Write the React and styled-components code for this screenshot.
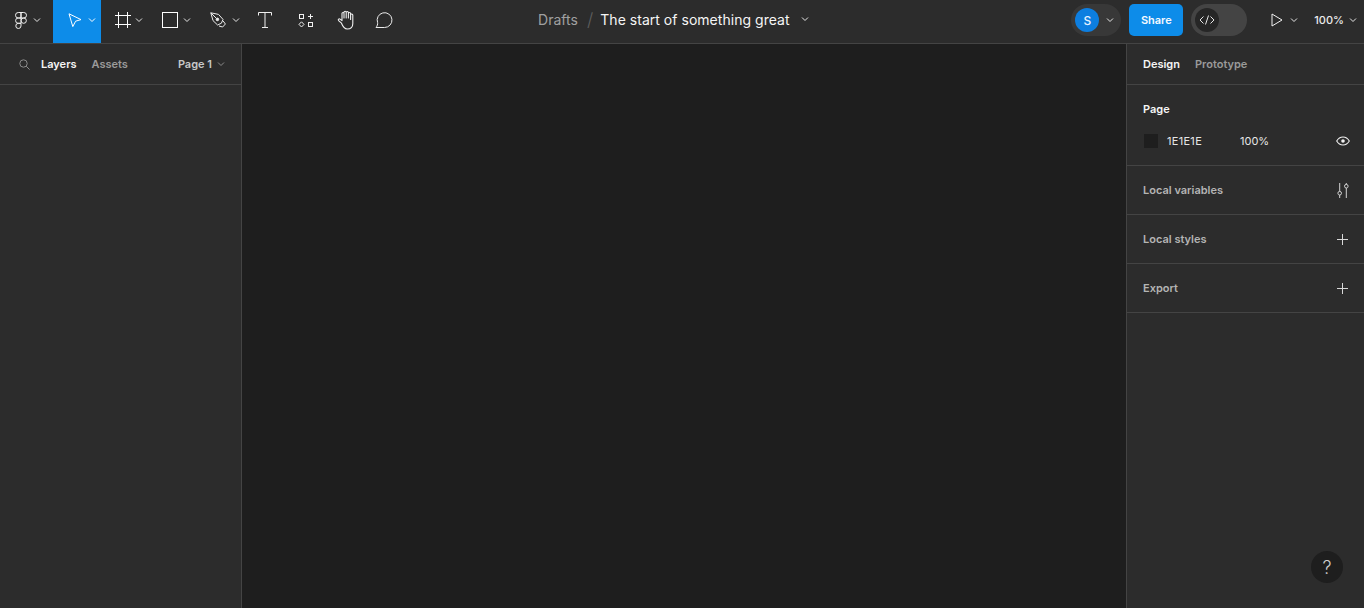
import React from "react";
import styled, { createGlobalStyle } from "styled-components";

const GlobalStyle = createGlobalStyle`
  html, body, #root {
    margin: 0;
    height: 100%;
  }
  body {
    background: #1e1e1e;
    color: #fff;
    font-family: Inter, "Liberation Sans", sans-serif;
    overflow: hidden;
  }
`;

const Chevron = ({ color = "#e6e6e6", size = 8 }) => (
  <svg width={size} height={size} viewBox="0 0 8 8" fill="none">
    <path d="M1 2.5L4 5.5L7 2.5" stroke={color} strokeWidth="1" />
  </svg>
);

const FigmaIcon = () => (
  <svg width="12" height="17" viewBox="0 0 12 17" fill="none" stroke="#f0f0f0" strokeWidth="1">
    <path d="M6 .5H3.25a2.75 2.75 0 0 0 0 5.5H6V.5Z" />
    <path d="M6 .5h2.75a2.75 2.75 0 0 1 0 5.5H6V.5Z" />
    <path d="M6 6H3.25a2.6 2.6 0 0 0 0 5.3H6V6Z" />
    <circle cx="8.7" cy="8.65" r="2.65" />
    <path d="M6 11.3H3.25a2.6 2.6 0 1 0 2.75 2.6v-2.6Z" />
  </svg>
);

const MoveIcon = () => (
  <svg width="14" height="15" viewBox="0 0 14 15" fill="none" stroke="#fff" strokeWidth="1">
    <path d="M1 .8L13 6.6L7.6 8.2L4.8 13.6L1 .8Z" strokeLinejoin="round" />
  </svg>
);

const FrameIcon = () => (
  <svg width="16" height="16" viewBox="0 0 16 16" fill="none" stroke="#fff" strokeWidth="1">
    <path d="M3.5 0v16M12.5 0v16M0 3.5h16M0 12.5h16" />
  </svg>
);

const RectIcon = () => (
  <svg width="16" height="16" viewBox="0 0 16 16" fill="none" stroke="#fff" strokeWidth="1">
    <rect x=".5" y=".5" width="15" height="15" />
  </svg>
);

const PenIcon = () => (
  <svg width="16" height="16" viewBox="0 0 16 16" fill="none" stroke="#ececec" strokeWidth="1">
    <path d="M.8.8L8.5 2.4L13 7.4L11.4 11.2L7.6 13L3 8.6L.8.8Z" strokeLinejoin="round" />
    <path d="M.8.8L6.6 6.6M13 8.8L15.4 12L12.6 15L9 14" />
    <circle cx="7.4" cy="7.4" r="1.3" fill="#ececec" />
  </svg>
);

const TextIcon = () => (
  <svg width="14" height="16" viewBox="0 0 14 16" fill="none" stroke="#f0f0f0" strokeWidth="1">
    <path d="M.5 3.5V.5h13v3M7 .5v15M4 15.5h6" />
  </svg>
);

const ResourcesIcon = () => (
  <svg width="16" height="15" viewBox="0 0 16 15" fill="none" stroke="#f0f0f0" strokeWidth="1">
    <rect x="1.5" y="1.5" width="4" height="4" />
    <rect x="10.5" y="9.5" width="4" height="4" />
    <path d="M12.5 1v5M10 3.5h5M3.5 8.8L6 11.4L3.5 14L1 11.4L3.5 8.8Z" />
  </svg>
);

const HandIcon = () => (
  <svg width="18" height="20" viewBox="0 0 18 20" fill="none" stroke="#f0f0f0" strokeWidth="1.1" strokeLinecap="round" strokeLinejoin="round">
    <path d="M4.5 13.2L1.6 10.6c-.9-.9.4-2.3 1.5-1.5L5 10.6V3.6c0-1.4 2-1.4 2 0V8M7 2.4c0-1.5 2.2-1.5 2.2 0V8M9.2 2.6c0-1.4 2.2-1.4 2.2 0V8M11.4 3.6c0-1.4 2.2-1.4 2.2 0V9.5M13.6 5c0-1.4 2.2-1.4 2.2 0v8.5c0 3.4-2.4 5.5-5.6 5.5-2.6 0-4-1.4-5.7-5.8" />
  </svg>
);

const CommentIcon = () => (
  <svg width="18" height="18" viewBox="0 0 18 18" fill="none" stroke="#ececec" strokeWidth="1">
    <path d="M1 16.5H9.6A7.4 7.4 0 1 0 2.6 11.6C2.9 13 2.2 15.2 1 16.5Z" strokeLinejoin="round" />
  </svg>
);

const SearchIcon = () => (
  <svg width="11" height="11" viewBox="0 0 11 11" fill="none" stroke="#8c8c8c" strokeWidth="1">
    <circle cx="4.5" cy="4.5" r="3.7" />
    <path d="M7.2 7.2L10.6 10.6" />
  </svg>
);

const PlayIcon = () => (
  <svg width="12" height="14" viewBox="0 0 12 14" fill="none" stroke="#f0f0f0" strokeWidth="1">
    <path d="M1 1v12l10-6L1 1Z" strokeLinejoin="round" />
  </svg>
);

const EyeIcon = () => (
  <svg width="14" height="10" viewBox="0 0 14 10" fill="none" stroke="#f2f2f2" strokeWidth="1.1">
    <path d="M.7 5C2.2 2.4 4.4 1 7 1s4.8 1.4 6.3 4C11.8 7.6 9.6 9 7 9S2.2 7.6.7 5Z" />
    <circle cx="7" cy="5" r="1.8" fill="#f2f2f2" stroke="none" />
  </svg>
);

const SlidersIcon = () => (
  <svg width="14" height="15" viewBox="0 0 14 15" fill="none" stroke="#d2d2d2" strokeWidth="1">
    <path d="M3.7 0v8.5M3.7 12v3M10.3 0v1.5M10.3 5v10" />
    <circle cx="3.7" cy="10.2" r="1.8" />
    <circle cx="10.3" cy="3.2" r="1.8" />
  </svg>
);

const PlusIcon = () => (
  <svg width="11" height="11" viewBox="0 0 11 11" fill="none" stroke="#d8d8d8" strokeWidth="1">
    <path d="M5.5 0v11M0 5.5h11" />
  </svg>
);

const Page = styled.div`
  width: 1364px;
  height: 608px;
  display: flex;
  flex-direction: column;
  position: relative;
`;

const Toolbar = styled.header`
  height: 43px;
  flex: none;
  display: flex;
  align-items: stretch;
  background: #2c2c2c;
  border-bottom: 1px solid #444;
`;

const ToolGroup = styled.div`
  display: flex;
  align-items: stretch;
  flex: none;
`;

const LogoButton = styled.div`
  width: 53px;
  padding: 0 0 3px 15px;
  box-sizing: border-box;
  display: flex;
  align-items: center;
  gap: 6px;
`;

const DropTool = styled.div`
  width: 48px;
  padding: 0 0 3px ${(p) => p.$pad}px;
  box-sizing: border-box;
  display: flex;
  align-items: center;
  gap: ${(p) => p.$gap}px;
  background: ${(p) => (p.$active ? "#0d8ce9" : "transparent")};
`;

const IconTool = styled.div`
  width: ${(p) => p.$w || 39.5}px;
  padding-bottom: 3px;
  box-sizing: border-box;
  display: flex;
  align-items: center;
  justify-content: center;
`;

const Breadcrumb = styled.div`
  flex: 1;
  display: flex;
  align-items: center;
  padding: 0 0 5px 134px;
  font-size: 14px;
  letter-spacing: 0.03px;
  white-space: nowrap;
`;

const Folder = styled.span`
  color: #a0a0a0;
`;

const Slash = styled.span`
  color: #5e5e5e;
  margin: 0 7px 0 9px;
  font-size: 18px;
  font-weight: 300;
`;

const FileName = styled.span`
  color: #f5f5f5;
  margin-right: 11px;
`;

const RightTools = styled.div`
  flex: none;
  display: flex;
  align-items: center;
  padding: 0 7px 3px 0;
`;

const AvatarPill = styled.div`
  width: 50px;
  height: 32px;
  border-radius: 16px;
  background: #383838;
  padding-left: 4px;
  box-sizing: border-box;
  display: flex;
  align-items: center;
  gap: 7px;
`;

const Avatar = styled.div`
  width: 24px;
  height: 24px;
  border-radius: 50%;
  background: #0d7ee0;
  color: #e8f2ff;
  font-size: 12px;
  font-weight: 500;
  display: flex;
  align-items: center;
  justify-content: center;
`;

const ShareButton = styled.div`
  width: 54px;
  height: 32px;
  margin-left: 8px;
  border-radius: 5px;
  background: #0d8ce9;
  color: #f4f9ff;
  font-size: 11px;
  font-weight: 600;
  display: flex;
  align-items: center;
  justify-content: center;
`;

const DevToggle = styled.div`
  width: 56px;
  height: 32px;
  margin-left: 8px;
  border-radius: 16px;
  background: #444;
  padding-left: 4px;
  box-sizing: border-box;
  display: flex;
  align-items: center;
`;

const DevKnob = styled.div`
  width: 24px;
  height: 24px;
  border-radius: 50%;
  background: #262626;
  display: flex;
  align-items: center;
  justify-content: center;
`;

const PlayButton = styled.div`
  margin-left: 24px;
  display: flex;
  align-items: center;
  gap: 7px;
`;

const Zoom = styled.div`
  margin-left: 16px;
  display: flex;
  align-items: center;
  gap: 5px;
  font-size: 11px;
  font-weight: 500;
  color: #ececec;
`;

const Body = styled.main`
  flex: 1;
  min-height: 0;
  display: flex;
`;

const LeftPanel = styled.aside`
  width: 241px;
  flex: none;
  background: #2c2c2c;
  border-right: 1px solid #444;
`;

const RightPanel = styled.aside`
  width: 237px;
  flex: none;
  background: #2c2c2c;
  border-left: 1px solid #444;
  position: relative;
`;

const Canvas = styled.div`
  flex: 1;
  background: #1e1e1e;
`;

const PanelHead = styled.div`
  height: 40px;
  display: flex;
  align-items: center;
  border-bottom: 1px solid #444;
  font-size: 11px;
  font-weight: 600;
`;

const LeftHead = styled(PanelHead)`
  padding: 0 16px 0 19px;
  gap: 11px;
`;

const RightHead = styled(PanelHead)`
  padding-left: 16px;
`;

const Tab = styled.span`
  color: ${(p) => (p.$active ? "#f5f5f5" : "#9a9a9a")};
  margin-right: ${(p) => (p.$active ? 15 : 0)}px;
`;

const LayersTab = styled(Tab)`
  margin-right: 4px;
`;

const PagePicker = styled.div`
  margin-left: auto;
  display: flex;
  align-items: center;
  gap: 5px;
  color: #c8c8c8;
`;

const Section = styled.section`
  height: 48px;
  padding: 0 ${(p) => p.$right || 16}px 0 16px;
  display: flex;
  align-items: center;
  justify-content: space-between;
  border-bottom: 1px solid #444;
  font-size: 11px;
  font-weight: 600;
  color: #b4b4b4;
`;

const PageSection = styled.section`
  height: 81px;
  padding: 0 14px 0 16px;
  box-sizing: border-box;
  border-bottom: 1px solid #444;
  display: flex;
  flex-direction: column;
`;

const SectionTitle = styled.div`
  font-size: 11px;
  font-weight: 600;
  color: #f5f5f5;
  margin-top: 18px;
  line-height: 13px;
`;

const FillRow = styled.div`
  display: flex;
  align-items: center;
  margin-top: 18px;
  font-size: 11px;
  color: #e6e6e6;
`;

const Swatch = styled.div`
  width: 14px;
  height: 14px;
  background: #1e1e1e;
  margin: 0 9px 0 1px;
`;

const HexValue = styled.span`
  width: 73px;
  letter-spacing: 0.3px;
`;

const EyeWrap = styled.span`
  margin-left: auto;
  display: flex;
`;

const HelpButton = styled.div`
  position: absolute;
  right: 21px;
  bottom: 25px;
  width: 32px;
  height: 32px;
  border-radius: 50%;
  background: #1e1e1e;
  color: #cfcfcf;
  font-size: 18px;
  font-weight: 300;
  display: flex;
  align-items: center;
  justify-content: center;
`;

export default function App() {
  return (
    <Page>
      <GlobalStyle />
      <Toolbar>
        <ToolGroup>
          <LogoButton>
            <FigmaIcon />
            <Chevron />
          </LogoButton>
          <DropTool $active $pad={15} $gap={6}>
            <MoveIcon />
            <Chevron color="#fff" />
          </DropTool>
          <DropTool $pad={14} $gap={4}>
            <FrameIcon />
            <Chevron />
          </DropTool>
          <DropTool $pad={13} $gap={5}>
            <RectIcon />
            <Chevron />
          </DropTool>
          <DropTool $pad={13} $gap={6}>
            <PenIcon />
            <Chevron />
          </DropTool>
          <IconTool $w={40}>
            <TextIcon />
          </IconTool>
          <IconTool $w={41.5}>
            <ResourcesIcon />
          </IconTool>
          <IconTool $w={38}>
            <HandIcon />
          </IconTool>
          <IconTool>
            <CommentIcon />
          </IconTool>
        </ToolGroup>
        <Breadcrumb>
          <Folder>Drafts</Folder>
          <Slash>/</Slash>
          <FileName>The start of something great</FileName>
          <Chevron />
        </Breadcrumb>
        <RightTools>
          <AvatarPill>
            <Avatar>S</Avatar>
            <Chevron />
          </AvatarPill>
          <ShareButton>Share</ShareButton>
          <DevToggle>
            <DevKnob>
              <svg width="16" height="10" viewBox="0 0 16 10" fill="none" stroke="#e6e6e6" strokeWidth="1">
                <path d="M4.5 1.5L1 5l3.5 3.5M11.5 1.5L15 5l-3.5 3.5M9.5.5l-3 9" />
              </svg>
            </DevKnob>
          </DevToggle>
          <PlayButton>
            <PlayIcon />
            <Chevron />
          </PlayButton>
          <Zoom>
            100%
            <Chevron />
          </Zoom>
        </RightTools>
      </Toolbar>
      <Body>
        <LeftPanel>
          <LeftHead>
            <SearchIcon />
            <LayersTab $active>Layers</LayersTab>
            <Tab>Assets</Tab>
            <PagePicker>
              Page 1
              <Chevron color="#8c8c8c" />
            </PagePicker>
          </LeftHead>
        </LeftPanel>
        <Canvas />
        <RightPanel>
          <RightHead>
            <Tab $active>Design</Tab>
            <Tab>Prototype</Tab>
          </RightHead>
          <PageSection>
            <SectionTitle>Page</SectionTitle>
            <FillRow>
              <Swatch />
              <HexValue>1E1E1E</HexValue>
              <span>100%</span>
              <EyeWrap>
                <EyeIcon />
              </EyeWrap>
            </FillRow>
          </PageSection>
          <Section $right={14}>
            Local variables
            <SlidersIcon />
          </Section>
          <Section>
            Local styles
            <PlusIcon />
          </Section>
          <Section>
            Export
            <PlusIcon />
          </Section>
          <HelpButton>?</HelpButton>
        </RightPanel>
      </Body>
    </Page>
  );
}
